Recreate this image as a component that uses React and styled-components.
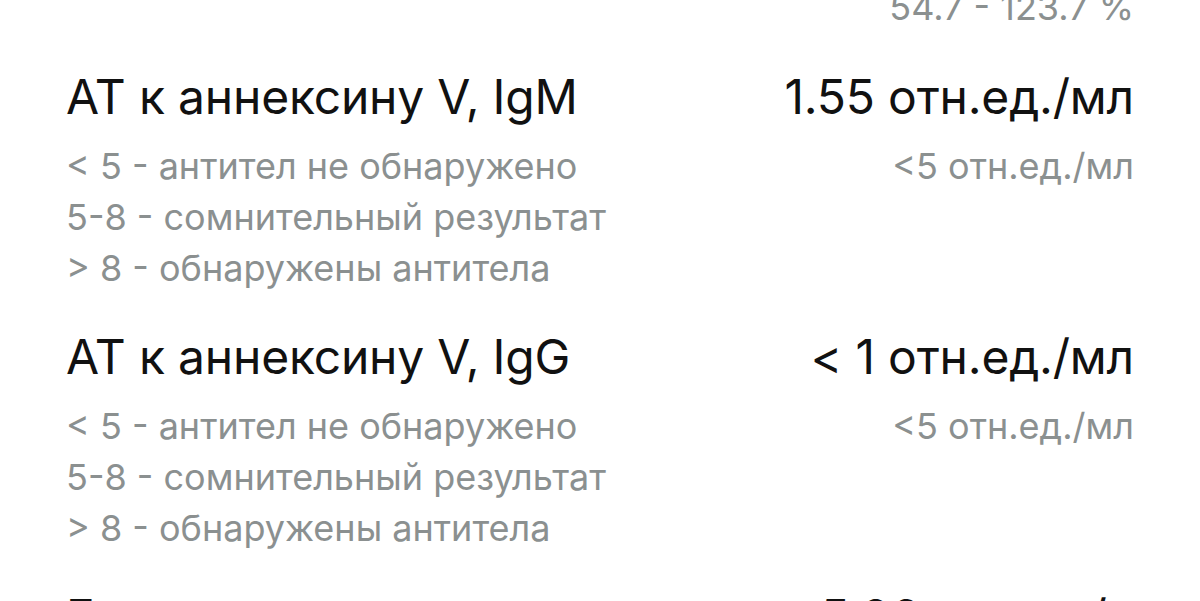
import React from 'react';
import styled, { createGlobalStyle } from 'styled-components';

const GlobalStyle = createGlobalStyle`
    html, body {
        margin: 0;
        padding: 0;
        background: #ffffff;
    }
    body {
        font-family: Inter, "Noto Sans", "Liberation Sans", sans-serif;
        -webkit-font-smoothing: antialiased;
    }
`;

const Page = styled.div`
    width: 1200px;
    height: 601px;
    overflow: hidden;
    box-sizing: border-box;
    padding: 0 66px;
`;

const List = styled.div`
    display: flex;
    flex-direction: column;
    margin-top: -18px;
`;

const Item = styled.div`
    display: grid;
    grid-template-columns: 1fr auto;
    row-gap: 10px;
    padding-bottom: 29px;

    &:first-child {
        padding-bottom: 30px;
    }
`;

const Name = styled.div`
    font-size: 48px;
    line-height: 68px;
    color: #111111;
    letter-spacing: -0.2px;
`;

const Value = styled(Name)`
    text-align: right;
`;

const Notes = styled.div`
    font-size: 36px;
    line-height: 51px;
    color: #8b9090;
    text-align: ${props => (props.right ? 'right' : 'left')};
    white-space: pre-line;
`;

const results = [
    {
        name: '',
        value: '',
        notes: '',
        norm: '54.7 - 123.7 %',
    },
    {
        name: 'АТ к аннексину V, IgM',
        value: '1.55 отн.ед./мл',
        notes: '< 5 - антител не обнаружено\n5-8 - сомнительный результат\n> 8 - обнаружены антитела',
        norm: '<5 отн.ед./мл',
    },
    {
        name: 'АТ к аннексину V, IgG',
        value: '< 1 отн.ед./мл',
        notes: '< 5 - антител не обнаружено\n5-8 - сомнительный результат\n> 8 - обнаружены антитела',
        norm: '<5 отн.ед./мл',
    },
    {
        name: 'Глюкоза',
        value: '5.06 ммоль/л',
        notes: '',
        norm: '',
    },
];

function App() {
    return (
        <Page>
            <GlobalStyle />
            <List>
                {results.map((r, i) => (
                    <Item key={i}>
                        {r.name || r.value ? (
                            <>
                                <Name>{r.name}</Name>
                                <Value>{r.value}</Value>
                            </>
                        ) : null}
                        <Notes>{r.notes}</Notes>
                        <Notes right>{r.norm}</Notes>
                    </Item>
                ))}
            </List>
        </Page>
    );
}

export default App;
